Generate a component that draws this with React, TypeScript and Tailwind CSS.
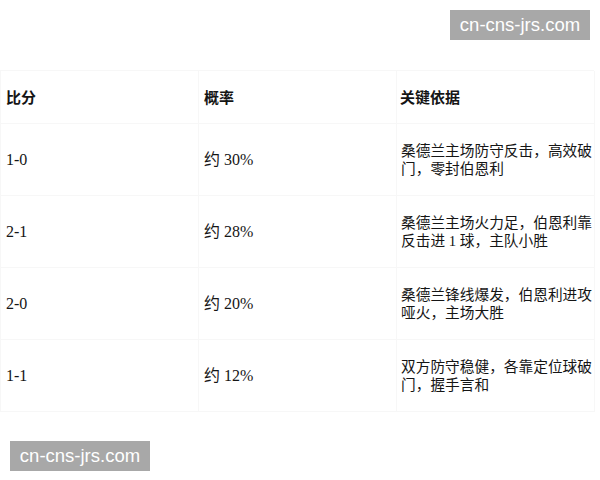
const rows = [
  { score: '1-0', prob: '约 30%', note: '桑德兰主场防守反击，高效破门，零封伯恩利' },
  { score: '2-1', prob: '约 28%', note: '桑德兰主场火力足，伯恩利靠反击进 1 球，主队小胜' },
  { score: '2-0', prob: '约 20%', note: '桑德兰锋线爆发，伯恩利进攻哑火，主场大胜' },
  { score: '1-1', prob: '约 12%', note: '双方防守稳健，各靠定位球破门，握手言和' },
];

function Badge() {
  return (
    <div className="flex h-[30px] w-[140px] items-center justify-center bg-[#a8a8a8] text-[18.5px] text-white [font-family:'Liberation_Sans',Arial,sans-serif]">
      cn-cns-jrs.com
    </div>
  );
}

const cell = 'flex items-center border-[#f7f7f7] border-r border-b pl-[5px]';

export default function App() {
  return (
    <div className="flex h-[480px] w-[600px] flex-col bg-white [font-family:'Liberation_Serif','Noto_Sans_CJK_SC',serif]">
      <div className="flex justify-end pt-[10px] pr-[10px]">
        <Badge />
      </div>

      <div className="mt-[30px] grid w-[594px] grid-cols-[198px_198px_198px] border-t border-l border-[#f7f7f7] text-[#151515]">
        <div className={`${cell} h-[53px] text-[15px] font-bold [font-family:'Noto_Sans_CJK_SC',sans-serif]`}>比分</div>
        <div className={`${cell} h-[53px] text-[15px] font-bold [font-family:'Noto_Sans_CJK_SC',sans-serif]`}>概率</div>
        <div className={`${cell} h-[53px] !pl-[3px] text-[15px] font-bold [font-family:'Noto_Sans_CJK_SC',sans-serif]`}>关键依据</div>
        {rows.map((r) => (
          <>
            <div key={r.score + 'a'} className={`${cell} h-[72px] text-[16px]`}>{r.score}</div>
            <div key={r.score + 'b'} className={`${cell} h-[72px] text-[16px]`}>{r.prob}</div>
            <div key={r.score + 'c'} className={`${cell} h-[72px] !pl-[4px] text-[14.7px] leading-[18px]`}>{r.note}</div>
          </>
        ))}
      </div>

      <div className="mt-[29px] pl-[10px]">
        <Badge />
      </div>
    </div>
  );
}
